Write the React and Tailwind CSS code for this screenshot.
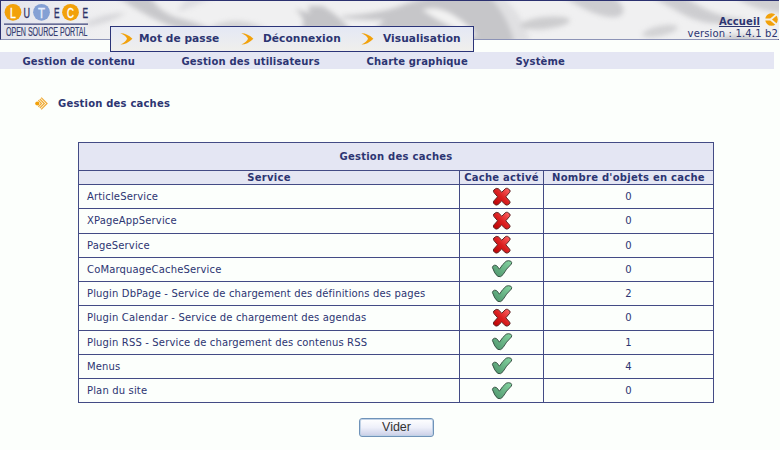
import React from "react";

const rows = [
  ["ArticleService", false, 0],
  ["XPageAppService", false, 0],
  ["PageService", false, 0],
  ["CoMarquageCacheService", true, 0],
  ["Plugin DbPage - Service de chargement des définitions des pages", true, 2],
  ["Plugin Calendar - Service de chargement des agendas", false, 0],
  ["Plugin RSS - Service de chargement des contenus RSS", true, 1],
  ["Menus", true, 4],
  ["Plan du site", true, 0],
];

function Cross() {
  return (
    <svg width="20" height="20" viewBox="0 0 20 20" className="block">
      <defs>
        <linearGradient id="red" x1="0" y1="1" x2="1" y2="0">
          <stop offset="0" stopColor="#b80000" />
          <stop offset="0.5" stopColor="#db2020" />
          <stop offset="1" stopColor="#ff6a6a" />
        </linearGradient>
      </defs>
      <path
        d="M4.2 1.4 L6.4 1.8 L9.8 5.2 L13.2 1.8 Q14.3 1 15.6 1.4 L17.8 3 Q18.6 4.2 17.6 5.4 L13.8 9.8 L17.7 14.2 Q18.6 15.6 17.4 16.8 L15.4 18 Q14 18.4 12.9 17.2 L9.6 14.1 L6.2 17.4 Q4.8 18.6 3.2 17.8 L1.6 16.2 Q1 14.9 2 13.8 L5.6 9.8 L2 5.6 Q1 4.4 1.8 3 Z"
        fill="url(#red)" stroke="#5c2424" strokeWidth="1" strokeLinejoin="round"
      />
    </svg>
  );
}

function Check() {
  return (
    <svg width="22" height="20" viewBox="0 0 22 20" className="block">
      <defs>
        <linearGradient id="green" x1="0" y1="1" x2="1" y2="0">
          <stop offset="0" stopColor="#4a9068" />
          <stop offset="1" stopColor="#86d6a2" />
        </linearGradient>
      </defs>
      <path
        d="M1.4 8.4 Q1.8 6.6 3.6 6.2 L5.4 6.5 Q6.8 7.8 8.4 10.2 Q11.6 5 15.2 2.2 Q17.4 1.2 19.8 2.2 Q21.2 3.4 20.4 5 Q15 10 12 15.6 Q9.8 18.8 6.8 17.4 Q3.4 14.8 1.4 8.4 Z"
        fill="url(#green)" stroke="#3a5446" strokeWidth="1" strokeLinejoin="round"
      />
    </svg>
  );
}

function Chevron() {
  return (
    <svg width="13" height="12" viewBox="0 0 13 12" className="block shrink-0">
      <path d="M0.3 0.2 Q6.5 0 12.4 5.7 Q6.5 11.6 0.3 11.6 Q6 9 7 5.8 Q6 2.6 0.3 0.2 Z" fill="#f2a20c" />
    </svg>
  );
}

function Backdrop() {
  return (
    <svg width="778" height="38" viewBox="1 1 778 38" className="absolute top-0 left-0">
      <defs>
        <filter id="soft" filterUnits="userSpaceOnUse" x="-20" y="-20" width="820" height="80" colorInterpolationFilters="sRGB">
          <feGaussianBlur stdDeviation="2.6" />
        </filter>
        <linearGradient id="logoBg">
          <stop offset="0" stopColor="#e1e2ec" />
          <stop offset="1" stopColor="#eeeef1" stopOpacity="0" />
        </linearGradient>
      </defs>
      <rect width="780" height="40" fill="#f0f0f1" />
      <g filter="url(#soft)">
        <path d="M86 22 Q105 13 126 13 Q112 22 88 27Z" fill="#d2d2d5" />
        <path d="M116 -4 H150 Q160 14 182 19 Q202 24 217 32 H186 Q150 20 116 -4Z" fill="#c8c8cb" />
        <path d="M190 -4 H214 Q198 6 178 12 Q180 4 190 -4Z" fill="#dedee1" />
        <path d="M205 30 Q235 12 268 30Z" fill="#d2d2d4" />
        <path d="M295 9 L310 13 L308 6 L322 6 Q336 13 351 30 H301 Q308 20 295 9Z" fill="#c4c4c7" />
        <path d="M342 16 Q385 13 405 4 Q425 -3 460 -8 H492 Q514 18 516 44 H470 V30 H372 Q382 24 384 20 Q366 20 342 18Z" fill="#c6c6c9" />
        <path d="M422 10 Q436 5 452 14 Q470 25 478 37 Q446 27 422 10Z" fill="#f2f2f2" />
        <path d="M350 23 Q366 22 378 27 L372 32 H350Z" fill="#f0f0f1" />
        <path d="M488 -5 H500 Q524 14 530 42 H514 Q508 16 488 -5Z" fill="#e0e0e2" />
        <ellipse cx="545" cy="23" rx="25" ry="6" fill="#cdcdcf" transform="rotate(-6 545 23)" />
        <path d="M562 -4 H612 Q630 9 620 16 Q602 22 562 -4Z" fill="#cdcdd0" />
        <path d="M650 -4 H684 Q715 19 748 19 Q716 30 686 16Z" fill="#cdcdd0" />
        <ellipse cx="660" cy="31" rx="18" ry="5" fill="#d2d2d4" transform="rotate(-12 660 31)" />
        <path d="M733 -4 H790 V13 Q757 13 733 -4Z" fill="#cfcfd2" />
        <ellipse cx="738" cy="40" rx="22" ry="5" fill="#cbcbce" />
      </g>
      <rect width="130" height="39" fill="url(#logoBg)" />
    </svg>
  );
}

function Logo() {
  return (
    <svg width="100" height="38" viewBox="1 1 100 38" className="relative block shrink-0 font-['Liberation_Sans',Arial,sans-serif]">
      <circle cx="13" cy="12.3" r="8.4" fill="#f2a10a" />
      <circle cx="41.5" cy="12.3" r="8.4" fill="#84a0d4" />
      <circle cx="70.5" cy="12.3" r="8.4" fill="#f2a10a" />
      <g fontSize="15.5" strokeWidth="0.4">
        <text transform="translate(10 17.8) scale(0.68 1)" fill="#fff" stroke="#fff">L</text>
        <text transform="translate(23.6 18) scale(0.58 1)" fill="#2b3268" stroke="#2b3268">U</text>
        <text transform="translate(38 17.8) scale(0.74 1)" fill="#e8effc" stroke="#e8effc">T</text>
        <text transform="translate(54 18) scale(0.54 1)" fill="#2b3268" stroke="#2b3268">E</text>
        <text transform="translate(67 17.8) scale(0.62 1)" fill="#fff" stroke="#fff">C</text>
        <text transform="translate(82.6 18) scale(0.54 1)" fill="#2b3268" stroke="#2b3268">E</text>
      </g>
      <path d="M4 24.2H88" stroke="#3b4278" strokeWidth="1.3" />
      <text transform="translate(6 36) scale(0.547 1)" textLength="149" fontSize="13" fill="#363d70" stroke="#363d70" strokeWidth="0.2">OPEN SOURCE PORTAL</text>
    </svg>
  );
}

export default function App() {
  return (
    <div className="h-[450px] w-[780px] overflow-hidden bg-[#fcfffc] font-['DejaVu_Sans',Verdana,sans-serif] text-[#2c3572]">
      <header className="relative flex h-10 w-[779px] justify-between border border-t-[#2b3170] border-r-[#2b3170] border-b-[#8c93b6] border-l-[#2b3170]">
        <Backdrop />
        <Logo />
        <div className="relative flex flex-col items-end whitespace-nowrap">
          <div className="mt-[12px] flex h-[15px] items-start gap-[5px]">
            <a className="mt-[2px] text-[10px] leading-[14px] font-bold tracking-[0.1px] underline">Accueil</a>
            <svg width="13" height="13" viewBox="0 0 13 13">
              <circle cx="6.5" cy="6.5" r="6.3" fill="#f2a10a" />
              <path d="M0 6.5 L5.5 6.5 L11.5 1.5 M5.5 6.5 L11.5 11.5" fill="none" stroke="#f3efe6" strokeWidth="1.8" />
            </svg>
          </div>
          <span className="text-[10px] leading-[11px] tracking-[0.15px]">version : 1.4.1 b2</span>
        </div>
        <div className="absolute top-[25px] left-[109px] flex h-[26px] w-[364px] items-center border border-[#2b3478] bg-linear-to-b from-[#e4e8f5] to-[#f0efec] pl-[9px] text-[10.6px] font-bold tracking-[0.06px] whitespace-nowrap">
          <div className="flex w-[121px] items-center gap-[6px]"><Chevron /><span>Mot de passe</span></div>
          <div className="flex w-[120px] items-center gap-[9px]"><Chevron /><span>Déconnexion</span></div>
          <div className="flex items-center gap-[9px]"><Chevron /><span>Visualisation</span></div>
        </div>
      </header>

      <nav className="mt-3 flex h-[17px] w-[774px] items-center bg-[#e4e6f3] pt-px pl-[22.5px] text-[10px] font-bold tracking-[0.16px] whitespace-nowrap">
        <span className="w-[159px]">Gestion de contenu</span>
        <span className="w-[185px]">Gestion des utilisateurs</span>
        <span className="w-[149px]">Charte graphique</span>
        <span>Système</span>
      </nav>

      <div className="mt-[27px] flex h-[14px] items-center gap-[10px] pl-[35px]">
        <svg width="13" height="13" viewBox="0 0 13 13">
          <circle cx="2.3" cy="6.5" r="2.1" fill="#f2a10a" />
          <path d="M3.3 3.3 L6.5 6.5 L3.3 9.7 M4.8 2 L9.3 6.5 L4.8 11 M6.2 0.6 L12 6.5 L6.2 12.4" fill="none" stroke="#f0ab36" strokeWidth="1.25" />
        </svg>
        <h1 className="text-[10px] font-bold tracking-[0.2px]">Gestion des caches</h1>
      </div>

      <table className="mt-[32px] ml-[78px] w-[636px] table-fixed border-collapse text-[10px] tracking-[0.15px] whitespace-nowrap [&_td]:border [&_td]:border-[#434b85] [&_td]:p-0 [&_th]:border [&_th]:border-[#434b85] [&_th]:bg-[#e4e6f3] [&_th]:p-0 [&_th]:leading-[12px] [&_th]:tracking-[0.26px]">
        <colgroup>
          <col className="w-[381px]" />
          <col className="w-[84px]" />
          <col className="w-[170px]" />
        </colgroup>
        <thead>
          <tr className="h-[28px]"><th colSpan="3">Gestion des caches</th></tr>
          <tr className="h-[14px]"><th>Service</th><th>Cache activé</th><th>Nombre d'objets en cache</th></tr>
        </thead>
        <tbody>
          {rows.map(([name, on, count]) => (
            <tr key={name} className="h-[24.25px]">
              <td><div className="pl-2">{name}</div></td>
              <td><div className="flex justify-center">{on ? <Check /> : <Cross />}</div></td>
              <td className="text-center">{count}</td>
            </tr>
          ))}
        </tbody>
      </table>

      <div className="mt-[14.5px] flex pl-[359px]">
        <button className="h-[19px] w-[75px] rounded-[3px] border border-[#6f93b9] bg-linear-to-b from-white via-[#eef0fa] to-[#c9cee6] font-['Liberation_Sans',Arial,sans-serif] text-[12.5px] leading-[17px] text-[#333] shadow-[inset_0_0_0_1px_#c0d2e6]">Vider</button>
      </div>
    </div>
  );
}
